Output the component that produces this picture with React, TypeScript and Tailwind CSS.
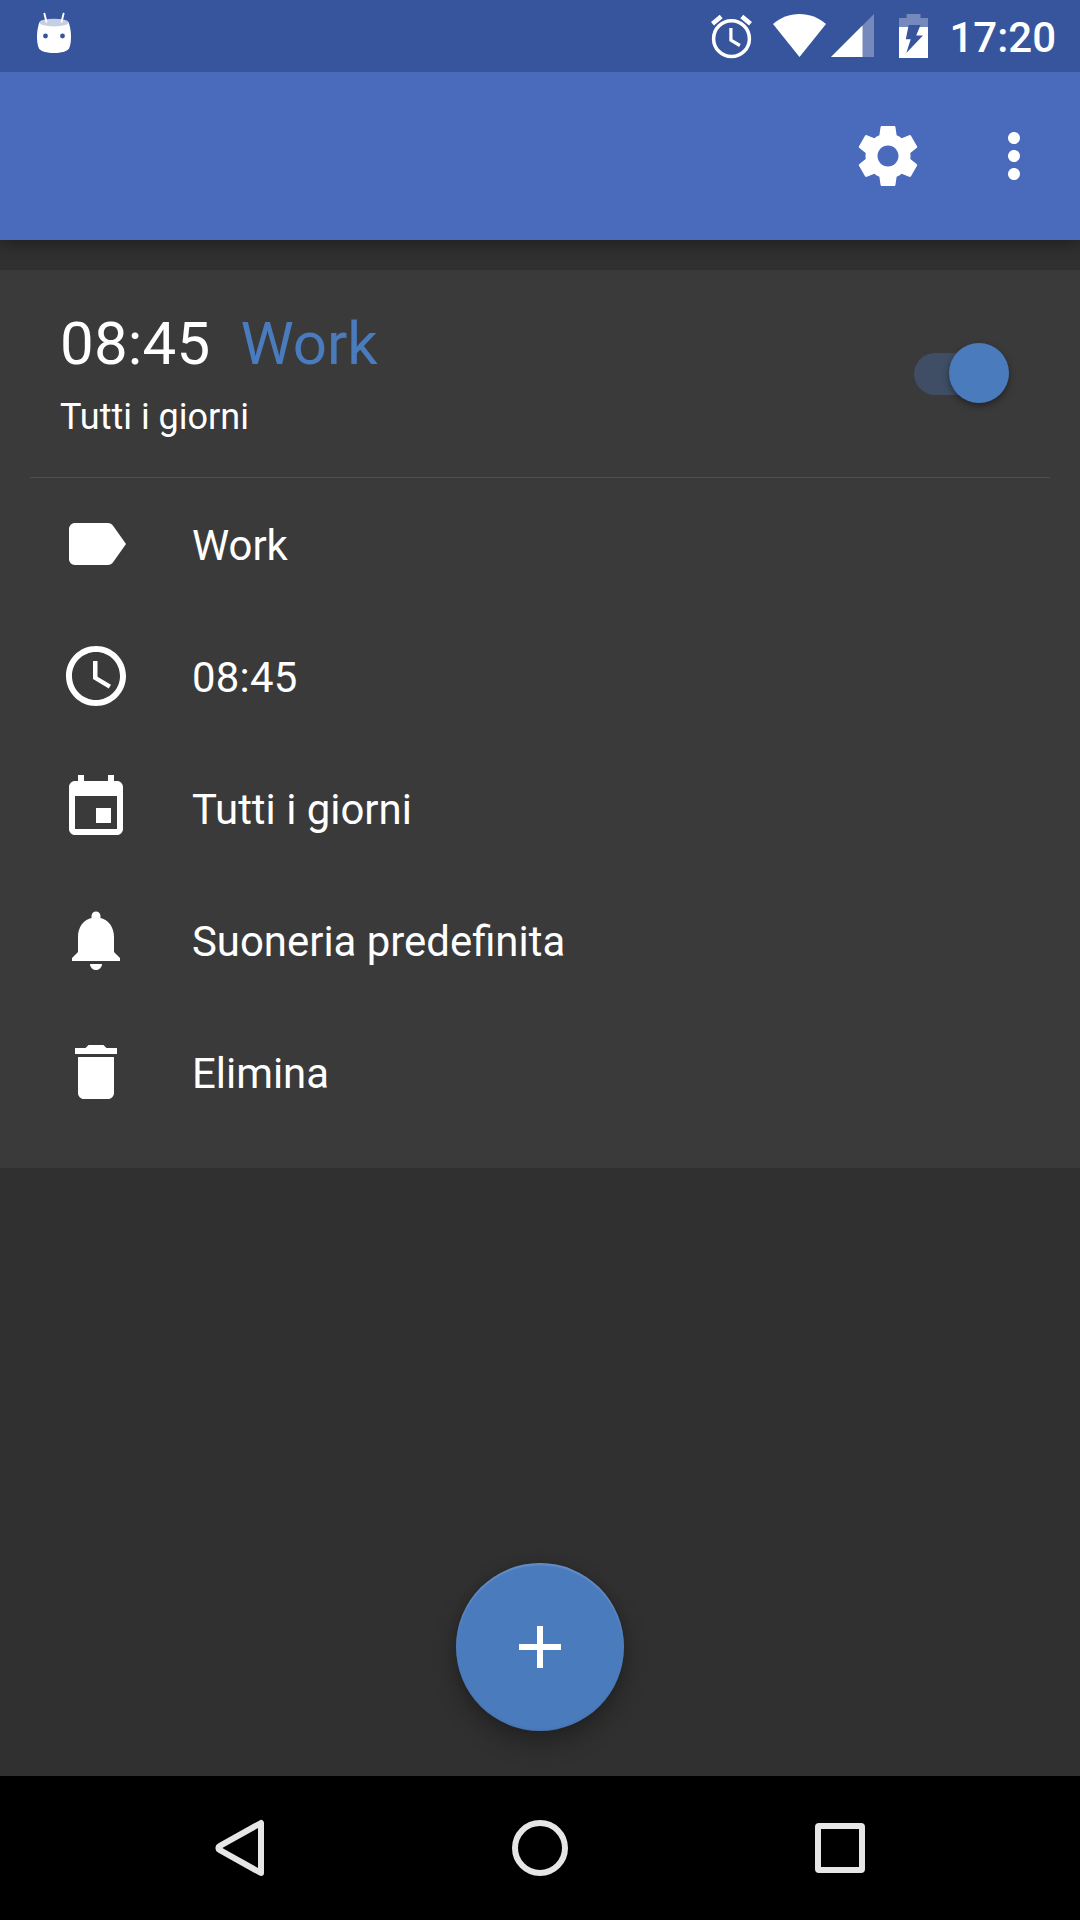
import type { ReactNode } from "react";

const ICONS = {
  settings:
    "M19.43 12.98c.04-.32.07-.64.07-.98s-.03-.66-.07-.98l2.11-1.65c.19-.15.24-.42.12-.64l-2-3.46c-.12-.22-.39-.3-.61-.22l-2.49 1c-.52-.4-1.08-.73-1.69-.98l-.38-2.65C14.46 2.18 14.25 2 14 2h-4c-.25 0-.46.18-.49.42l-.38 2.65c-.61.25-1.17.59-1.69.98l-2.49-1c-.23-.09-.49 0-.61.22l-2 3.46c-.13.22-.07.49.12.64l2.11 1.65c-.04.32-.07.65-.07.98s.03.66.07.98l-2.11 1.65c-.19.15-.24.42-.12.64l2 3.46c.12.22.39.3.61.22l2.49-1c.52.4 1.08.73 1.69.98l.38 2.65c.03.24.24.42.49.42h4c.25 0 .46-.18.49-.42l.38-2.65c.61-.25 1.17-.59 1.69-.98l2.49 1c.23.09.49 0 .61-.22l2-3.46c.12-.22.07-.49-.12-.64l-2.11-1.65zM12 15.5c-1.93 0-3.5-1.57-3.5-3.5s1.57-3.5 3.5-3.5 3.5 1.57 3.5 3.5-1.57 3.5-3.5 3.5z",
  more: "M12 8c1.1 0 2-.9 2-2s-.9-2-2-2-2 .9-2 2 .9 2 2 2zm0 2c-1.1 0-2 .9-2 2s.9 2 2 2 2-.9 2-2-.9-2-2-2zm0 6c-1.1 0-2 .9-2 2s.9 2 2 2 2-.9 2-2-.9-2-2-2z",
  label:
    "M17.63 5.84C17.27 5.33 16.67 5 16 5L5 5.01C3.9 5.01 3 5.9 3 7v10c0 1.1.9 1.99 2 1.99L16 19c.67 0 1.27-.33 1.63-.84L22 12l-4.37-6.16z",
  clock:
    "M11.99 2C6.47 2 2 6.48 2 12s4.47 10 9.99 10C17.52 22 22 17.52 22 12S17.52 2 11.99 2zM12 20c-4.42 0-8-3.58-8-8s3.58-8 8-8 8 3.58 8 8-3.58 8-8 8zm.5-13H11v6l5.25 3.15.75-1.23-4.5-2.67z",
  event:
    "M17 12h-5v5h5v-5zM16 1v2H8V1H6v2H5c-1.11 0-1.99.9-1.99 2L3 19c0 1.1.89 2 2 2h14c1.1 0 2-.9 2-2V5c0-1.1-.9-2-2-2h-1V1h-2zm3 18H5V8h14v11z",
  bell: "M12 22c1.1 0 2-.9 2-2h-4c0 1.1.89 2 2 2zm6-6v-5c0-3.07-1.64-5.64-4.5-6.32V4c0-.83-.67-1.5-1.5-1.5s-1.5.67-1.5 1.5v.68C7.63 5.36 6 7.92 6 11v5l-2 2v1h16v-1l-2-2z",
  trash:
    "M6 19c0 1.1.9 2 2 2h8c1.1 0 2-.9 2-2V7H6v12zM19 4h-3.5l-1-1h-5l-1 1H5v2h14V4z",
  add: "M19 13h-6v6h-2v-6H5v-2h6V5h2v6h6v2z",
};

function Icon({ name }: { name: keyof typeof ICONS }) {
  return (
    <svg viewBox="0 0 24 24" className="size-[72px] shrink-0 fill-white">
      <path d={ICONS[name]} />
    </svg>
  );
}

function StatusBar() {
  return (
    <header className="relative z-20 flex h-[72px] items-start justify-between bg-[#37559d] text-white">
      <svg viewBox="0 0 40 46" className="ml-[34px] mt-[10px] h-[46px] w-10">
        <path
          d="M5.2 12.5C4 17 3 21 3 26c0 5 .3 9 2 12.500C7 41.500 13 43 20 43s13-1.500 15-4.500c1.700-3.500 2-7.500 2-12.500 0-5-1-9-2.200-13.500z"
          fill="#fff"
        />
        <ellipse cx="20" cy="12.600" rx="14.600" ry="3.900" fill="#c6cee4" />
        <path d="M10.400 3.600l2 8.200M29.600 3.600l-2 8.200" stroke="#fff" strokeWidth="1.900" strokeLinecap="round" />
        <circle cx="11.500" cy="26" r="2.400" fill="#37559d" />
        <circle cx="28.500" cy="26" r="2.400" fill="#37559d" />
      </svg>
      <div className="flex items-start">
        <svg viewBox="0 0 44 46" className="mt-[13px] h-[46px] w-11 fill-none stroke-white">
          <circle cx="21.500" cy="25.700" r="17.900" strokeWidth="3.500" />
          <path d="M20.900 15v12.200l9 5.300" strokeWidth="3.200" />
          <path d="M2.500 10.800l8.700-7.300M31.800 3.500l8.700 7.300" strokeWidth="4.600" />
        </svg>
        <svg viewBox="0 0 54 44" className="ml-[19px] mt-[14px] h-11 w-[54px]">
          <path d="M0 10C7.500 3.600 16.500 0 26.500 0S45.500 3.600 53 10L26.500 43z" fill="#fff" />
        </svg>
        <svg viewBox="0 0 43 43" className="ml-[4px] mt-[14px] size-[43px]">
          <path d="M0 43L43 0v43z" fill="#7589bd" />
          <path d="M0 43L31.500 11.500V43z" fill="#fff" />
        </svg>
        <svg viewBox="0 0 29 44" className="ml-[25px] mt-[14px] h-11 w-[29px]">
          <path d="M7.500 0h14v4H29v10H0V4h7.500z" fill="#7589bd" />
          <path d="M0 13h29v31H0z" fill="#fff" />
          <path d="M9.700 11h11.800l-4.300 10.500H24L7.300 39l4.400-13.800H6.800z" fill="#37559d" />
        </svg>
        <span className="ml-[21px] mr-[24px] mt-[13px] text-[42px] leading-[49px] font-medium">17:20</span>
      </div>
    </header>
  );
}

function AppBar() {
  return (
    <div className="z-10 flex h-[168px] items-center justify-end gap-[54px] bg-[#4a6bbc] pr-[30px] shadow-[0_3px_16px_rgba(0,0,0,0.4)]">
      <Icon name="settings" />
      <Icon name="more" />
    </div>
  );
}

function Row({ icon, children }: { icon: keyof typeof ICONS; children: ReactNode }) {
  return (
    <li className="flex h-[132px] items-center gap-[60px] pl-[60px]">
      <Icon name={icon} />
      <span className="pt-[3px] text-[41.900px] leading-[49px]">{children}</span>
    </li>
  );
}

function AlarmCard() {
  return (
    <section className="mt-[30px] h-[898px] bg-[#3a3a3a] text-white">
      <div className="mx-[30px] flex h-[208px] items-start justify-between border-b border-[#4e4e4e] pl-[30px] pr-[41px]">
        <div className="pt-[39px]">
          <div className="flex gap-[30px] text-[60px] leading-[70px]">
            <span className="tracking-[0.200px]">08:45</span>
            <span className="text-[#4a7bbd]">Work</span>
          </div>
          <div className="mt-[17px] text-[36px] leading-[42px]">Tutti i giorni</div>
        </div>
        <div className="mt-[83px] flex h-[42px] w-[95px] items-center justify-end rounded-full bg-[#3f4e64]">
          <div className="-mt-[2px] size-[60px] shrink-0 rounded-full bg-[#4a7bbd] shadow-[0_3px_7px_rgba(0,0,0,0.4)]" />
        </div>
      </div>
      <ul>
        <Row icon="label">Work</Row>
        <Row icon="clock">
          <span className="tracking-[0.250px]">08:45</span>
        </Row>
        <Row icon="event">Tutti i giorni</Row>
        <Row icon="bell">Suoneria predefinita</Row>
        <Row icon="trash">Elimina</Row>
      </ul>
    </section>
  );
}

function NavBar() {
  return (
    <nav className="flex h-36 items-center justify-center gap-60 bg-black">
      <svg viewBox="0 0 60 60" className="size-[60px] fill-none stroke-[#e6e6e6] stroke-[6]">
        <path d="M51 5v50L9.500 31.800a2 2 0 0 1 0-3.600z" strokeLinejoin="round" />
      </svg>
      <svg viewBox="0 0 60 60" className="size-[60px] fill-none stroke-[#e6e6e6] stroke-[6]">
        <circle cx="30" cy="30" r="25" />
      </svg>
      <svg viewBox="0 0 60 60" className="size-[60px] fill-none stroke-[#e6e6e6] stroke-[6]">
        <rect x="8" y="8" width="44" height="44" rx="1" />
      </svg>
    </nav>
  );
}

export default function App() {
  return (
    <div className="flex h-[1920px] w-[1080px] flex-col overflow-hidden bg-[#303030] font-[Roboto,sans-serif]">
      <StatusBar />
      <AppBar />
      <AlarmCard />
      <div className="flex flex-1 items-end justify-center pb-[45px]">
        <button
          aria-label="Aggiungi"
          className="flex size-[168px] items-center justify-center rounded-full bg-[#4a7bbd] shadow-[0_12px_24px_rgba(0,0,0,0.28),0_0_10px_rgba(0,0,0,0.12),inset_0_2px_2px_rgba(255,255,255,0.16),inset_0_-2px_2px_rgba(0,0,0,0.04)]"
        >
          <Icon name="add" />
        </button>
      </div>
      <NavBar />
    </div>
  );
}
